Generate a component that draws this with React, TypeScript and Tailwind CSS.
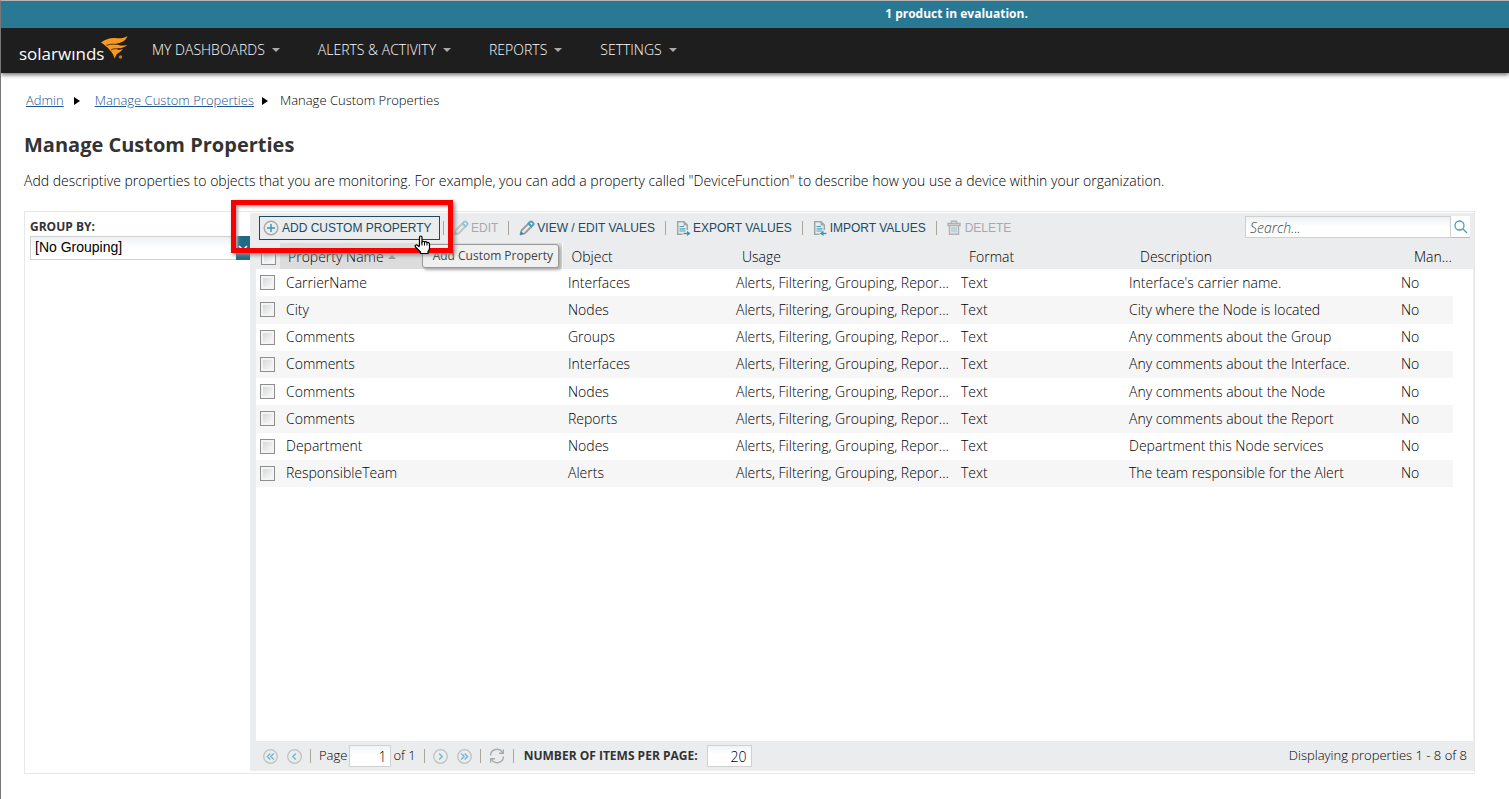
import type { ReactNode } from "react";

const rows = [
  ["CarrierName", "Interfaces", "Interface's carrier name."],
  ["City", "Nodes", "City where the Node is located"],
  ["Comments", "Groups", "Any comments about the Group"],
  ["Comments", "Interfaces", "Any comments about the Interface."],
  ["Comments", "Nodes", "Any comments about the Node"],
  ["Comments", "Reports", "Any comments about the Report"],
  ["Department", "Nodes", "Department this Node services"],
  ["ResponsibleTeam", "Alerts", "The team responsible for the Alert"],
];

const navItems = ["MY DASHBOARDS", "ALERTS & ACTIVITY", "REPORTS", "SETTINGS"];

const checkbox =
  "block h-[15px] w-[15px] appearance-none border border-[#8e8f8f] bg-linear-to-br from-[#cfd2d6] to-white shadow-[inset_0_0_0_2px_#f4f4f4]";

function Logo() {
  return (
    <a href="#" aria-label="solarwinds" className="relative block w-[109px] pt-[6px] text-[17px] leading-6 font-medium text-white">
      <span>solarwınds</span>
      <svg className="absolute top-0 right-0" width="27" height="24" viewBox="0 0 27 24" fill="#f8991d">
        <path d="M0 6.500 C5 3 9 1.500 16 2.200 C20 2.400 24 2 26.500 0 C25 4.500 21 7 15 7.600 L19 9.600 C22 9.700 24 9.400 26.500 9 C23 12 19 12.300 16 12.800 L17 13.700 C19 13.700 20.500 13.500 22 13 C20 16 17 16.500 15.500 18.500 L13.500 22.500 C12.500 17 7 11 0 6.500Z" />
        <path d="M5.500 9.200 C11 7.200 15 8.800 20 8.500M10 14 C13 11.800 16 13.200 19 12.700" stroke="#1e1e1e" strokeWidth="0.800" fill="none" />
        <circle cx="19.500" cy="21" r="1.700" fill="#c87c1c" />
      </svg>
    </a>
  );
}

function PlusIcon() {
  return (
    <svg className="shrink-0" width="16" height="16" viewBox="0 0 16 16" fill="none">
      <circle cx="8" cy="8" r="6.800" stroke="#a9abad" strokeWidth="1.400" />
      <path d="M8 4v8M4 8h8" stroke="#3895b3" strokeWidth="1.400" />
    </svg>
  );
}

function PencilIcon() {
  return (
    <svg width="16" height="16" viewBox="0 0 16 16" fill="none" strokeLinejoin="round">
      <path d="M1.500 14.500 L2.500 10.500 L9.500 3.500 L12.500 6.500 L5.500 13.500Z" stroke="#999b9d" strokeWidth="1.800" />
      <path d="M9.500 3.500 L11.300 1.700 Q12 1 12.800 1.700 L14.300 3.200 Q15 4 14.300 4.700 L12.500 6.500Z" stroke="#46a0bd" strokeWidth="1.800" />
      <path d="M1 15 L2 11 L5 14Z" fill="#2f8fb0" />
    </svg>
  );
}

function FileIcon({ out }: { out?: boolean }) {
  return (
    <svg width="15" height="16" viewBox="0 0 15 16" fill="none">
      <path d="M6.500 14.200H1.700V1.700H8L11.300 5V10" stroke="#a3a5a7" strokeWidth="1.500" />
      <path d="M7.500 1V5.500H12Z" fill="#a3a5a7" />
      <path d="M3.500 6.500H8M3.500 8.800H9.500M3.500 11H9.500" stroke="#46a0bd" strokeWidth="1.200" />
      <path d="M7.500 13.500H13.500" stroke="#3895b3" strokeWidth="1.400" />
      {out ? <path d="M11 10.800L14.500 13.500L11 16Z" fill="#3895b3" /> : <path d="M10.500 10.800L7 13.500L10.500 16Z" fill="#3895b3" />}
    </svg>
  );
}

function TrashIcon() {
  return (
    <svg className="mr-[2px]" width="14" height="16" viewBox="0 0 14 16" fill="none">
      <path d="M1 5.500V3.500H13V5.500ZM4.500 3V1.200H9.500V3" stroke="#777" strokeWidth="1.400" />
      <path d="M2.500 6V14.300H11.500V6" stroke="#777" strokeWidth="1.400" />
      <path d="M5 7V12.500M7 7V12.500M9 7V12.500" stroke="#2f8fb0" />
    </svg>
  );
}

function PageIcon({ d }: { d: string }) {
  return (
    <svg width="15" height="15" viewBox="0 0 15 15" fill="none">
      <circle cx="7.500" cy="7.500" r="6.800" stroke="#c0c1c3" strokeWidth="1.300" />
      <path d={d} stroke="#6cbad2" strokeWidth="1.400" />
    </svg>
  );
}

function Separator() {
  return <span className="h-[14px] w-px shrink-0 bg-[#aaa798]" />;
}

function ToolButton({ icon, disabled, children }: { icon: ReactNode; disabled?: boolean; children: ReactNode }) {
  return (
    <button disabled={disabled} className="flex h-6 items-center gap-[2px] whitespace-nowrap text-[#204a63] disabled:text-[#666] disabled:opacity-50">
      {icon}
      {children}
    </button>
  );
}

function Toolbar() {
  return (
    <div className="flex h-[30px] items-center justify-between pr-[3px] pl-[9px]">
      <div className="flex items-center font-['Liberation_Sans',sans-serif] text-[12px] font-normal">
        {/* highlighted button with its tooltip */}
        <div className="relative mr-[3px]">
          <button className="flex h-6 w-[181px] items-center gap-[3px] border border-[#204a63] pl-[3px] whitespace-nowrap text-[#204a63]">
            <PlusIcon />
            ADD CUSTOM PROPERTY
          </button>
          <div role="tooltip" className="absolute top-7 left-[163px] z-10 h-6 w-[137px] rounded-[3px] border border-[#9a9a9a] bg-[#f0f0f1] px-[5px] text-right font-['Open_Sans',sans-serif] text-[12px] leading-[22px] whitespace-nowrap text-[#444] shadow-[2px_2px_3px_#aaa]">
            Add Custom Property
          </div>
          <div className="pointer-events-none absolute -top-4 -left-7 z-20 h-[53px] w-[222px] border-5 border-[#f90000] shadow-[2px_2px_4px_#888,inset_2px_2px_3px_#aaa]" />
          <svg className="absolute top-[19px] left-[155px] z-30" width="18" height="20" viewBox="0 0 18 20">
            <path d="M5.500 11 V2.500 Q5.500 1 6.700 1 Q8 1 8 2.500 V7 Q9 5.500 10.500 7 Q12 6 13 7.500 Q15.500 7 15.500 9.500 V13 Q15.500 15 14 16.500 V18.500 H6.500 V17 L1.500 12 Q0.500 10.500 2 10 Q3 9.500 5.500 12" fill="#fff" stroke="#000" strokeWidth="1.200" />
            <path d="M8 7V10.500M10.500 7V10.500M13 7.500V10.500" stroke="#000" />
          </svg>
        </div>
        <Separator />
        <div className="flex items-center gap-[10px] pl-[9px]">
          <ToolButton icon={<PencilIcon />} disabled>EDIT</ToolButton>
          <Separator />
          <ToolButton icon={<PencilIcon />}>VIEW / EDIT VALUES</ToolButton>
          <Separator />
          <ToolButton icon={<FileIcon out />}>EXPORT VALUES</ToolButton>
          <Separator />
          <ToolButton icon={<FileIcon />}>IMPORT VALUES</ToolButton>
          <Separator />
          <ToolButton icon={<TrashIcon />} disabled>DELETE</ToolButton>
        </div>
      </div>
      <form className="mb-[2px] flex h-[22px]">
        <input
          aria-label="Search"
          placeholder="Search..."
          className="w-[206px] border border-[#cfd0d1] bg-linear-to-b from-[#eef1f3] to-white to-50% px-1 text-[14px] italic outline-none placeholder:text-[#444]"
        />
        <button type="button" aria-label="Search" className="flex w-[19px] items-center justify-center border-b border-[#b4bccb] bg-white">
          <svg width="14" height="14" viewBox="0 0 14 14" fill="none" stroke="#46a0bd" strokeWidth="1.300">
            <circle cx="5.500" cy="5.500" r="4.500" />
            <path d="M9 9L13 13" />
          </svg>
        </button>
      </form>
    </div>
  );
}

function PropertyTable() {
  return (
    <div className="ml-[6px] flex-1 bg-white">
      <table className="w-full table-fixed text-left text-[14px] leading-5">
        <colgroup>
          <col className="w-6" />
          <col className="w-[282px]" />
          <col className="w-[168px]" />
          <col className="w-[225px]" />
          <col className="w-[168px]" />
          <col />
          <col className="w-[58px]" />
          <col className="w-5" />
        </colgroup>
        <thead className="bg-[#ebecee]">
          <tr className="h-[26px] whitespace-nowrap [&>th]:p-0 [&>th]:pt-[2px] [&>th]:font-light">
            <th><input type="checkbox" aria-label="Select all" className={`${checkbox} ml-[5px]`} /></th>
            <th className="border-r border-white bg-[#dcdcdd]">
              <div className="flex items-center gap-1 pl-2">
                Property Name
                <svg width="8" height="4" viewBox="0 0 8 4"><path d="M0 4L4 0L8 4Z" fill="#999" /></svg>
              </div>
            </th>
            <th><div className="pl-[9px]">Object</div></th>
            <th><div className="pl-3">Usage</div></th>
            <th><div className="pl-[14px]">Format</div></th>
            <th><div className="pl-[17px]">Description</div></th>
            <th><div className="pl-[19px]">Man...</div></th>
            <th />
          </tr>
        </thead>
      </table>
      <div className="pr-5">
        <table aria-label="Custom properties" className="h-[218px] w-full table-fixed text-[14px] leading-5">
          <colgroup>
            <col className="w-6" />
            <col className="w-[282px]" />
            <col className="w-[168px]" />
            <col className="w-[225px]" />
            <col className="w-[168px]" />
            <col />
            <col className="w-[58px]" />
          </colgroup>
          <tbody>
            {rows.map(([name, object, description], i) => (
              <tr key={i} className="whitespace-nowrap even:bg-[#f6f6f6] [&>td]:py-0 [&>td]:pl-[6px]">
                <td><input type="checkbox" aria-label={`Select ${name}`} className={`${checkbox} -ml-[2px]`} /></td>
                <td>{name}</td>
                <td>{object}</td>
                <td>Alerts, Filtering, Grouping, Repor...</td>
                <td>Text</td>
                <td>{description}</td>
                <td>No</td>
              </tr>
            ))}
          </tbody>
        </table>
      </div>
    </div>
  );
}

function Pager() {
  const field = "h-[22px] border border-[#d0d1d2] bg-linear-to-b from-[#f1f3f4] to-white to-40% px-1 text-right text-[14px] outline-none";
  return (
    <div className="flex h-[30px] items-center justify-between pr-[6px] pl-[13px] text-[13px]">
      <div className="flex items-center gap-2">
        <button aria-label="First page" className="mr-px"><PageIcon d="M7.300 4.500L4.300 7.500L7.300 10.500M10.800 4.500L7.800 7.500L10.800 10.500" /></button>
        <button aria-label="Previous page"><PageIcon d="M8.800 4.500L5.800 7.500L8.800 10.500" /></button>
        <Separator />
        <div className="flex items-center gap-[2px]">
          <label htmlFor="page">Page</label>
          <input id="page" defaultValue="1" className={`${field} w-[42px]`} />
          <span>of 1</span>
        </div>
        <Separator />
        <button aria-label="Next page" className="mr-px"><PageIcon d="M6.200 4.500L9.200 7.500L6.200 10.500" /></button>
        <button aria-label="Last page"><PageIcon d="M4.200 4.500L7.200 7.500L4.200 10.500M7.700 4.500L10.700 7.500L7.700 10.500" /></button>
        <Separator />
        <button aria-label="Refresh">
          <svg width="16" height="16" viewBox="0 0 16 16" fill="none" stroke="#a8aaac" strokeWidth="1.400">
            <path d="M1.500 7.500A6.300 6.300 0 0 1 13.500 5M14.500 8.500A6.300 6.300 0 0 1 2.500 11" />
            <path d="M14.300 1.500V5.300H10M1.700 14.500V10.700H6" />
          </svg>
        </button>
        <Separator />
        <div className="flex items-center gap-[9px] pl-[2px]">
          <label htmlFor="size" className="text-[12px] font-bold text-[#333]">NUMBER OF ITEMS PER PAGE:</label>
          <input id="size" defaultValue="20" className={`${field} w-[45px]`} />
        </div>
      </div>
      <span>Displaying properties 1 - 8 of 8</span>
    </div>
  );
}

export default function App() {
  return (
    <div className="min-h-screen border-t border-l border-t-[#b5b5b5] border-l-[#777] bg-white font-['Open_Sans',sans-serif] font-light text-black">
      {/* evaluation banner */}
      <div className="h-[27px] bg-[#297994] pl-[403px] text-center text-[12px] leading-[26px] font-bold text-white">
        1 product in evaluation.
      </div>

      <header className="flex h-[45px] items-center gap-6 bg-[#1e1e1e] pl-[18px] shadow-[0_2px_4px_#777]">
        <Logo />
        <nav className="flex items-center gap-[38px] pb-[2px] text-[14px] text-white">
          {navItems.map((item) => (
            <a key={item} href="#" className="flex items-center gap-[7px]">
              {item}
              <svg width="8" height="4" viewBox="0 0 8 4"><path d="M0 0H8L4 4Z" fill="#aaa" /></svg>
            </a>
          ))}
        </nav>
      </header>

      <main className="pr-[34px] pl-[23px]">
        <nav aria-label="Breadcrumb" className="mt-[18px] flex h-5 items-center pl-[2px] text-[13px]">
          <a href="#" className="text-[#1f5590] underline">Admin</a>
          <svg className="mr-[15px] ml-[10px]" width="6" height="8" viewBox="0 0 6 8"><path d="M0 0L6 4L0 8Z" /></svg>
          <a href="#" className="text-[#1f5590] underline">Manage Custom Properties</a>
          <svg className="mr-3 ml-2" width="6" height="8" viewBox="0 0 6 8"><path d="M0 0L6 4L0 8Z" /></svg>
          <span>Manage Custom Properties</span>
        </nav>
        <h1 className="mt-[19px] text-[20px] leading-[30px] font-bold text-[#333]">Manage Custom Properties</h1>
        <p className="mt-[11px] text-[14px] leading-5">
          Add descriptive properties to objects that you are monitoring. For example, you can add a property called "DeviceFunction" to describe how you use a device within your organization.
        </p>

        <div className="mt-5 flex h-[563px] border border-[#e6e7e9]">
          <aside className="w-[225px] shrink-0 pt-[6px] pl-[5px]">
            <label htmlFor="group" className="block text-[12px] leading-[18px] font-bold text-[#333]">GROUP BY:</label>
            <div className="relative">
              <select id="group" className="block h-6 w-full appearance-none border border-[#cfd0d1] bg-linear-to-b from-[#eef1f3] to-white to-50% pb-[2px] pl-1 font-['Liberation_Sans',sans-serif] text-[14px] font-normal text-black">
                <option>[No Grouping]</option>
              </select>
              <span className="pointer-events-none absolute top-0 right-0 flex h-6 w-[14px] items-center justify-center bg-[#1f6b87]">
                <svg width="10" height="6" viewBox="0 0 10 6" fill="none" stroke="#fff" strokeWidth="1.500"><path d="M1 1L5 5L9 1" /></svg>
              </span>
            </div>
          </aside>
          <section className="mt-px mb-[2px] flex min-w-0 flex-1 flex-col bg-[#ebecee] pr-px">
            <Toolbar />
            <PropertyTable />
            <Pager />
          </section>
        </div>
      </main>
    </div>
  );
}
